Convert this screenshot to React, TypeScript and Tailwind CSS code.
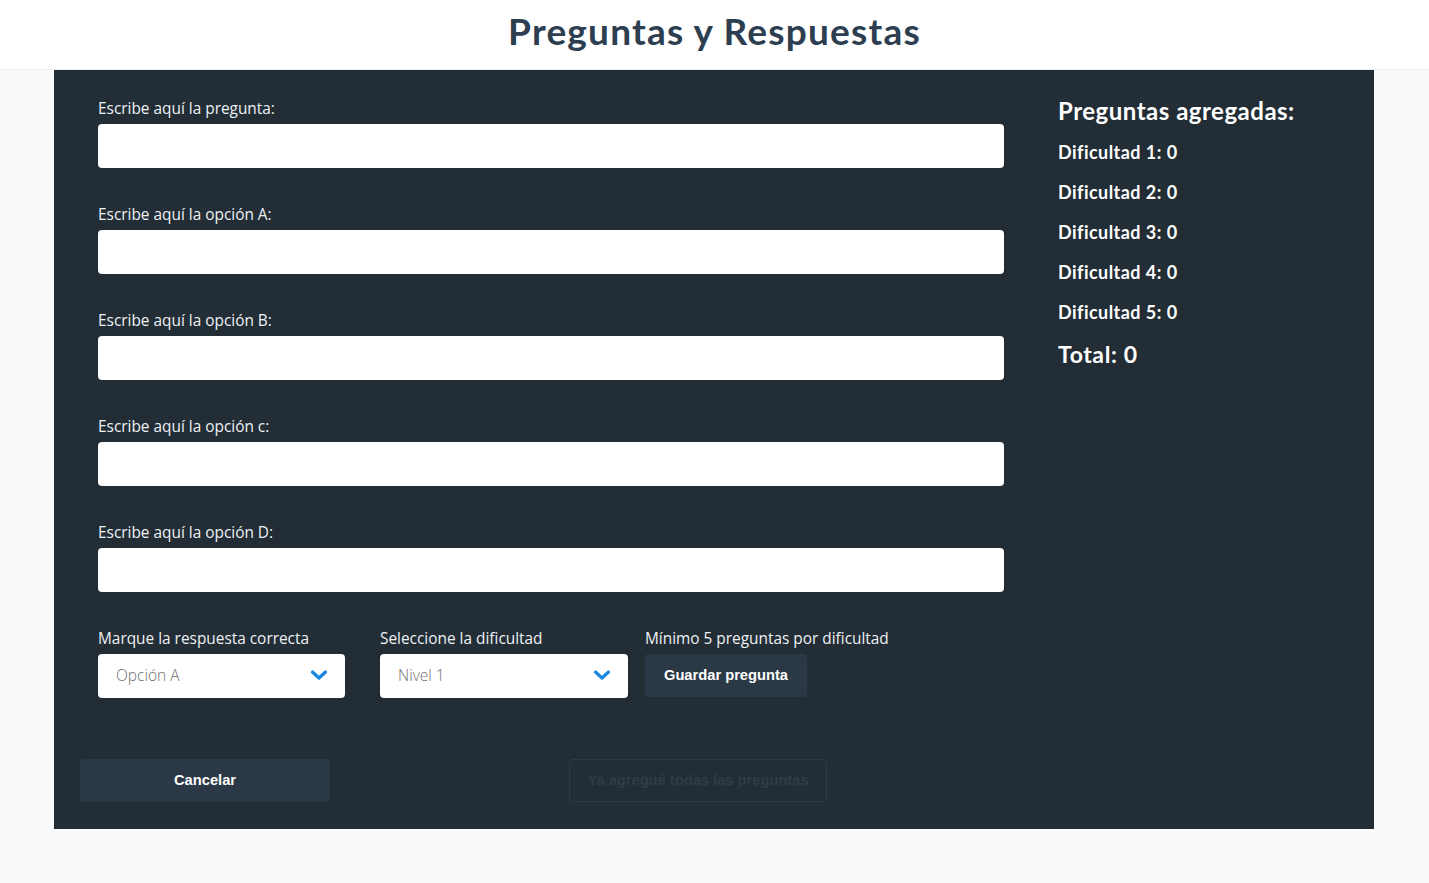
import { ChangeEvent, useState } from "react";

type Counts = Record<number, number>;

const fields = [
  { id: "pregunta", label: "Escribe aquí la pregunta:" },
  { id: "opcionA", label: "Escribe aquí la opción A:" },
  { id: "opcionB", label: "Escribe aquí la opción B:" },
  { id: "opcionC", label: "Escribe aquí la opción c:" },
  { id: "opcionD", label: "Escribe aquí la opción D:" },
];

function Chevron() {
  return (
    <svg width="18" height="12" viewBox="0 0 18 12" className="pointer-events-none">
      <polyline
        points="2.5,3 9,9 15.5,3"
        fill="none"
        stroke="#1a86e0"
        strokeWidth="3.2"
        strokeLinecap="round"
        strokeLinejoin="round"
      />
    </svg>
  );
}

type SelectProps = {
  label: string;
  value: string;
  options: string[];
  onChange: (value: string) => void;
};

function Select({ label, value, options, onChange }: SelectProps) {
  return (
    <div className="flex flex-col">
      <label className="mb-[4px] text-[15.4px] leading-[22px] text-[#eef1f4]">{label}</label>
      <div className="relative">
        <select
          value={value}
          onChange={(e: ChangeEvent<HTMLSelectElement>) => onChange(e.target.value)}
          className="h-[44px] w-full appearance-none rounded-[4px] bg-white pl-[18px] text-[15.5px] font-light text-[#6f6f6f] outline-none"
        >
          {options.map((o) => (
            <option key={o}>{o}</option>
          ))}
        </select>
        <span className="absolute right-[17px] top-[15px]">
          <Chevron />
        </span>
      </div>
    </div>
  );
}

export default function App() {
  const [values, setValues] = useState<Record<string, string>>({});
  const [answer, setAnswer] = useState("Opción A");
  const [level, setLevel] = useState("Nivel 1");
  const [counts] = useState<Counts>({ 1: 0, 2: 0, 3: 0, 4: 0, 5: 0 });

  const total = Object.values(counts).reduce((a, b) => a + b, 0);

  return (
    <div className="min-h-[883px] bg-[#f9fafc] font-['Open_Sans',sans-serif]">
      <header className="flex h-[70px] items-center justify-center border-b border-[#eeeeee] bg-white pb-[8px]">
        <h1 className="font-['Lato',sans-serif] text-[37px] font-bold tracking-[1.2px] text-[#2c3e50]">
          Preguntas y Respuestas
        </h1>
      </header>

      <main className="ml-[54px] w-[1320px] bg-[#222d36] pb-[27px] pt-[28px]">
        <div className="flex px-[44px]">
          <div className="w-[906px]">
            {fields.map((f) => (
              <div key={f.id} className="mb-[36px] flex flex-col">
                <label htmlFor={f.id} className="mb-[4px] text-[15.4px] leading-[22px] text-[#eef1f4]">
                  {f.label}
                </label>
                <input
                  id={f.id}
                  value={values[f.id] ?? ""}
                  onChange={(e) => setValues({ ...values, [f.id]: e.target.value })}
                  className="h-[44px] rounded-[4px] bg-white px-4 text-[15px] outline-none"
                />
              </div>
            ))}

            <div className="flex items-start">
              <div className="w-[247px]">
                <Select
                  label="Marque la respuesta correcta"
                  value={answer}
                  options={["Opción A", "Opción B", "Opción C", "Opción D"]}
                  onChange={setAnswer}
                />
              </div>
              <div className="ml-[35px] w-[248px]">
                <Select
                  label="Seleccione la dificultad"
                  value={level}
                  options={["Nivel 1", "Nivel 2", "Nivel 3", "Nivel 4", "Nivel 5"]}
                  onChange={setLevel}
                />
              </div>
              <div className="ml-[17px] flex flex-col">
                <span className="mb-[4px] text-[15.4px] leading-[22px] text-[#eef1f4]">
                  Mínimo 5 preguntas por dificultad
                </span>
                <button className="h-[43px] w-[162px] rounded-[4px] bg-[#2b3946] font-['Liberation_Sans',sans-serif] text-[14.7px] font-bold text-white">
                  Guardar pregunta
                </button>
              </div>
            </div>
          </div>

          <aside className="ml-[54px] flex-1 font-['Lato',sans-serif] text-white">
            <h2 className="text-[24px] font-bold leading-[26px] tracking-[0.5px]">Preguntas agregadas:</h2>
            <ul className="mt-[17px]">
              {[1, 2, 3, 4, 5].map((n) => (
                <li key={n} className="h-[40px] text-[18px] font-bold leading-[22px] tracking-[0.45px]">
                  Dificultad {n}: {counts[n]}
                </li>
              ))}
            </ul>
            <p className="text-[23px] font-bold leading-[26px] tracking-[0.6px]">Total: {total}</p>
          </aside>
        </div>

        <div className="mt-[61px] flex px-[26px]">
          <button className="h-[43px] w-[250px] rounded-[4px] bg-[#2b3946] font-['Liberation_Sans',sans-serif] text-[14.7px] font-bold text-white">
            Cancelar
          </button>
          <button
            disabled
            className="ml-[239px] h-[43px] w-[258px] rounded-[4px] border border-[#2e3b47] font-['Liberation_Sans',sans-serif] text-[14.7px] font-bold text-[#2f3c48]"
          >
            Ya agregué todas las preguntas
          </button>
        </div>
      </main>
    </div>
  );
}
